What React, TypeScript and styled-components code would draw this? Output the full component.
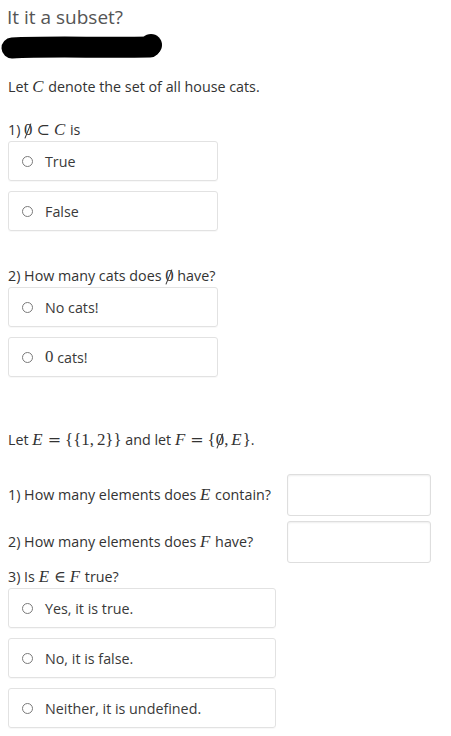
import React from "react";
import styled, { createGlobalStyle } from "styled-components";

const GlobalStyle = createGlobalStyle`
  html, body {
    margin: 0;
    padding: 0;
    background: #ffffff;
  }
  body {
    font-family: "Open Sans", "Noto Sans", sans-serif;
    font-size: 14.3px;
    color: #333333;
  }
`;

const Page = styled.div`
  width: 451px;
  padding: 0 8px 8px 8px;
  box-sizing: border-box;
`;

const Title = styled.h1`
  margin: 7px 0 0 -1px;
  font-size: 19px;
  font-weight: 400;
  line-height: 20px;
  color: #555555;
`;

const Scribble = styled.svg`
  display: block;
  margin: 5px 0 0 -8px;
`;

const Line = styled.p<{ $mt: number }>`
  margin: ${({ $mt }) => $mt}px 0 0 0;
  line-height: 18px;
  height: 18px;
  white-space: nowrap;
`;

const Math = styled.span`
  font-family: "Liberation Serif", "DejaVu Serif", serif;
  font-size: 1.18em;
  line-height: 1;
`;

const Var = styled.i`
  font-style: italic;
  margin-right: 1px;
`;

const Op = styled.span`
  font-family: "DejaVu Serif", serif;
  font-size: 0.95em;
  margin: 0 4px;
`;

const Comma = styled.span`
  margin-right: 3px;
`;

const Empty = styled.span`
  position: relative;
  display: inline-block;
  &::after {
    content: "";
    position: absolute;
    left: 50%;
    top: 8%;
    width: 1px;
    height: 92%;
    background: currentColor;
    transform: translateX(-50%) rotate(22deg);
  }
`;

const Options = styled.div<{ $width: number }>`
  display: flex;
  flex-direction: column;
  gap: 10px;
  width: ${({ $width }) => $width}px;
  margin-top: 2px;
`;

const Option = styled.label`
  display: flex;
  align-items: center;
  height: 40px;
  box-sizing: border-box;
  padding-left: 13px;
  border: 1px solid #e2e2e2;
  border-radius: 3px;
  box-shadow: 0 1px 1px rgba(0, 0, 0, 0.03);
  color: #3a3a3a;
`;

const Radio = styled.span`
  width: 9px;
  height: 9px;
  border: 1px solid #7a7a7a;
  border-radius: 50%;
  margin-right: 12px;
  flex: none;
`;

const AnswerGrid = styled.div`
  display: grid;
  grid-template-columns: 279px 144px;
  row-gap: 5px;
  align-items: center;
  margin-top: 25px;
`;

const AnswerText = styled.span`
  line-height: 18px;
  white-space: nowrap;
`;

const AnswerInput = styled.input`
  height: 42px;
  box-sizing: border-box;
  border: 1px solid #dedede;
  border-radius: 3px;
  box-shadow: inset 0 1px 2px rgba(0, 0, 0, 0.07);
  outline: none;
`;

const EmptySet = () => <Empty>0</Empty>;

const Choice = ({ children }: { children: React.ReactNode }) => (
  <Option>
    <Radio />
    {children}
  </Option>
);

export default function App() {
  return (
    <>
      <GlobalStyle />
      <Page>
        <Title>It it a subset?</Title>
        <Scribble width="170" height="30" viewBox="0 32 170 30">
          <path
            d="M12 48 C 50 46, 100 48, 150 47"
            stroke="#000"
            strokeWidth="21"
            strokeLinecap="round"
            fill="none"
          />
          <circle cx="151" cy="45" r="11" fill="#000" />
        </Scribble>

        <Line $mt={16}>
          Let <Math><Var>C</Var></Math> denote the set of all house cats.
        </Line>

        <Line $mt={25}>
          1) <Math><EmptySet /><Op>⊂</Op><Var>C</Var></Math> is
        </Line>
        <Options $width={210}>
          <Choice>True</Choice>
          <Choice>False</Choice>
        </Options>

        <Line $mt={36}>
          2) How many cats does <Math><EmptySet /></Math> have?
        </Line>
        <Options $width={210}>
          <Choice>No cats!</Choice>
          <Choice>
            <Math>0</Math>&nbsp;cats!
          </Choice>
        </Options>

        <Line $mt={54}>
          Let{" "}
          <Math>
            <Var>E</Var><Op>=</Op>
            {"{{1"}<Comma>,</Comma>{"2}}"}
          </Math>{" "}
          and let{" "}
          <Math>
            <Var>F</Var><Op>=</Op>
            {"{"}<EmptySet /><Comma>,</Comma><Var>E</Var>{"}"}
          </Math>.
        </Line>

        <AnswerGrid>
          <AnswerText>
            1) How many elements does <Math><Var>E</Var></Math> contain?
          </AnswerText>
          <AnswerInput type="text" />
          <AnswerText>
            2) How many elements does <Math><Var>F</Var></Math> have?
          </AnswerText>
          <AnswerInput type="text" />
        </AnswerGrid>

        <Line $mt={5}>
          3) Is <Math><Var>E</Var><Op>∈</Op><Var>F</Var></Math> true?
        </Line>
        <Options $width={268}>
          <Choice>Yes, it is true.</Choice>
          <Choice>No, it is false.</Choice>
          <Choice>Neither, it is undefined.</Choice>
        </Options>
      </Page>
    </>
  );
}
